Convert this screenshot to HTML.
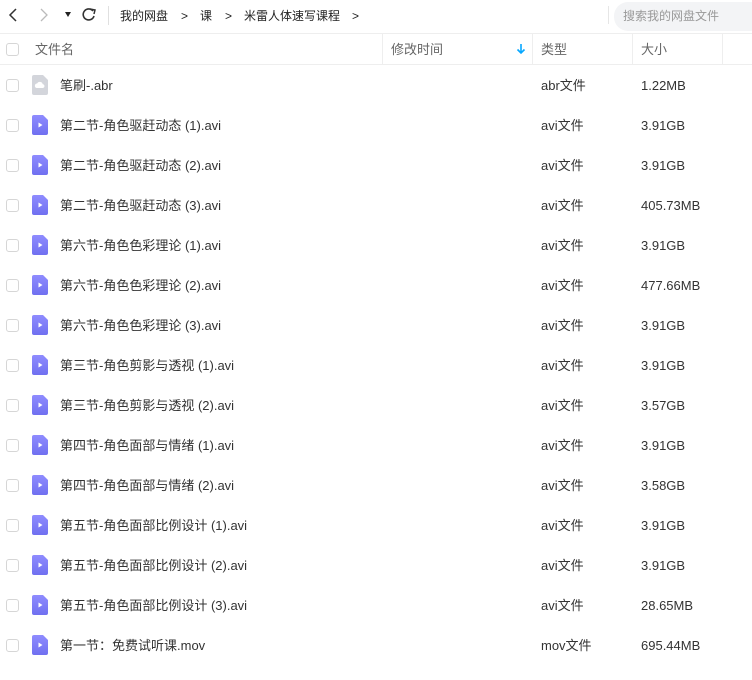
<!DOCTYPE html>
<html><head><meta charset="utf-8"><style>
*{margin:0;padding:0;box-sizing:border-box}
body{width:752px;height:680px;background:#fff;font-family:"Liberation Sans","Noto Sans CJK SC",sans-serif;font-size:13px;line-height:16px;color:#333;position:relative;overflow:hidden}
.abs{position:absolute;white-space:nowrap}
.cb{position:absolute;left:6px;width:13px;height:13px;border:1px solid #d6d6d6;border-radius:3px;background:#fff}
.row{position:absolute;left:0;width:752px;height:40px}
.row .cb{top:14px}
.row .ic{position:absolute;left:32px;top:10px}
.row .n,.row .t,.row .s{position:absolute;top:13px;white-space:nowrap;height:16px}
.row .n{left:60px}
.row .t{left:541px}
.row .s{left:641px}
.hd{color:#666}
.bc{font-size:12px;color:#222;top:8px}
</style></head><body>
<svg class="abs" style="left:0;top:0" width="110" height="32">
<path d="M16 9 L10 15 L16 21" fill="none" stroke="#333" stroke-width="1.5"/>
<path d="M41 9 L47 15 L41 21" fill="none" stroke="#bbb" stroke-width="1.3"/>
<path d="M65 12 L71 12 L68 17 Z" fill="#222"/>
<path d="M93 11 A5.5 5.5 0 1 0 94 16" fill="none" stroke="#333" stroke-width="1.6"/>
<path d="M90 9 L95 10 L94 14" fill="none" stroke="#333" stroke-width="1.5"/>
<line x1="108.5" y1="6" x2="108.5" y2="25" stroke="#e0e0e0"/>
</svg>
<div class="abs bc" style="left:120px">我的网盘</div>
<div class="abs bc" style="left:181px">&gt;</div>
<div class="abs bc" style="left:200px">课</div>
<div class="abs bc" style="left:225px">&gt;</div>
<div class="abs bc" style="left:244px">米雷人体速写课程</div>
<div class="abs bc" style="left:352px">&gt;</div>
<div class="abs" style="left:608px;top:6px;width:1px;height:18px;background:#e6e6e6"></div>
<div class="abs" style="left:614px;top:2px;width:150px;height:29px;background:#f3f4f6;border-radius:14px"></div>
<div class="abs" style="left:623px;top:8px;color:#999;font-size:12px">搜索我的网盘文件</div>
<div class="abs" style="left:0;top:33px;width:752px;height:1px;background:#eee"></div>
<div class="abs" style="left:0;top:64px;width:752px;height:1px;background:#eee"></div>
<div class="abs" style="left:382px;top:34px;width:1px;height:30px;background:#eee"></div>
<div class="abs" style="left:532px;top:34px;width:1px;height:30px;background:#eee"></div>
<div class="abs" style="left:632px;top:34px;width:1px;height:30px;background:#eee"></div>
<div class="abs" style="left:722px;top:34px;width:1px;height:30px;background:#eee"></div>
<div class="cb" style="top:43px"></div>
<div class="abs hd" style="left:35px;top:42px">文件名</div>
<div class="abs hd" style="left:391px;top:42px">修改时间</div>
<svg class="abs" style="left:516px;top:43px" width="10" height="12"><path d="M5 1 V10 M1.5 6.5 L5 10 L8.5 6.5" fill="none" stroke="#06a7ff" stroke-width="1.6"/></svg>
<div class="abs hd" style="left:541px;top:42px">类型</div>
<div class="abs hd" style="left:641px;top:42px">大小</div>

<div class="row" style="top:65px"><div class="cb"></div>
<svg class="ic" width="16" height="20"><path d="M2 0 H11 L16 5 V18 a2 2 0 0 1 -2 2 H2 a2 2 0 0 1 -2 -2 V2 a2 2 0 0 1 2 -2Z" fill="#d3d5db"/><path d="M4.5 13 a2.3 2.3 0 0 1 .6-4.5 a3 3 0 0 1 5.6 .6 a2 2 0 0 1 .3 3.9Z" fill="#fff"/></svg>
<div class="n">笔刷-.abr</div><div class="t">abr文件</div><div class="s">1.22MB</div></div>

<div id="rows"></div>
<script>
var d=[["第二节-角色驱赶动态 (1).avi","avi文件","3.91GB"],["第二节-角色驱赶动态 (2).avi","avi文件","3.91GB"],["第二节-角色驱赶动态 (3).avi","avi文件","405.73MB"],["第六节-角色色彩理论 (1).avi","avi文件","3.91GB"],["第六节-角色色彩理论 (2).avi","avi文件","477.66MB"],["第六节-角色色彩理论 (3).avi","avi文件","3.91GB"],["第三节-角色剪影与透视 (1).avi","avi文件","3.91GB"],["第三节-角色剪影与透视 (2).avi","avi文件","3.57GB"],["第四节-角色面部与情绪 (1).avi","avi文件","3.91GB"],["第四节-角色面部与情绪 (2).avi","avi文件","3.58GB"],["第五节-角色面部比例设计 (1).avi","avi文件","3.91GB"],["第五节-角色面部比例设计 (2).avi","avi文件","3.91GB"],["第五节-角色面部比例设计 (3).avi","avi文件","28.65MB"],["第一节：免费试听课.mov","mov文件","695.44MB"]];
var h="";
d.forEach(function(r,i){h+='<div class="row" style="top:'+(105+i*40)+'px"><div class="cb"></div><svg class="ic" width="16" height="20"><defs><linearGradient id="g'+i+'" x1="0" y1="0" x2="0" y2="1"><stop offset="0" stop-color="#8f8cff"/><stop offset="1" stop-color="#7070f0"/></linearGradient></defs><path d="M2 0 H11 L16 5 V18 a2 2 0 0 1 -2 2 H2 a2 2 0 0 1 -2 -2 V2 a2 2 0 0 1 2 -2Z" fill="url(#g'+i+')"/><path d="M6.5 7.5 L10.5 10 L6.5 12.5Z" fill="#fff"/></svg><div class="n">'+r[0]+'</div><div class="t">'+r[1]+'</div><div class="s">'+r[2]+'</div></div>';});
document.getElementById("rows").innerHTML=h;
</script>
</body></html>
